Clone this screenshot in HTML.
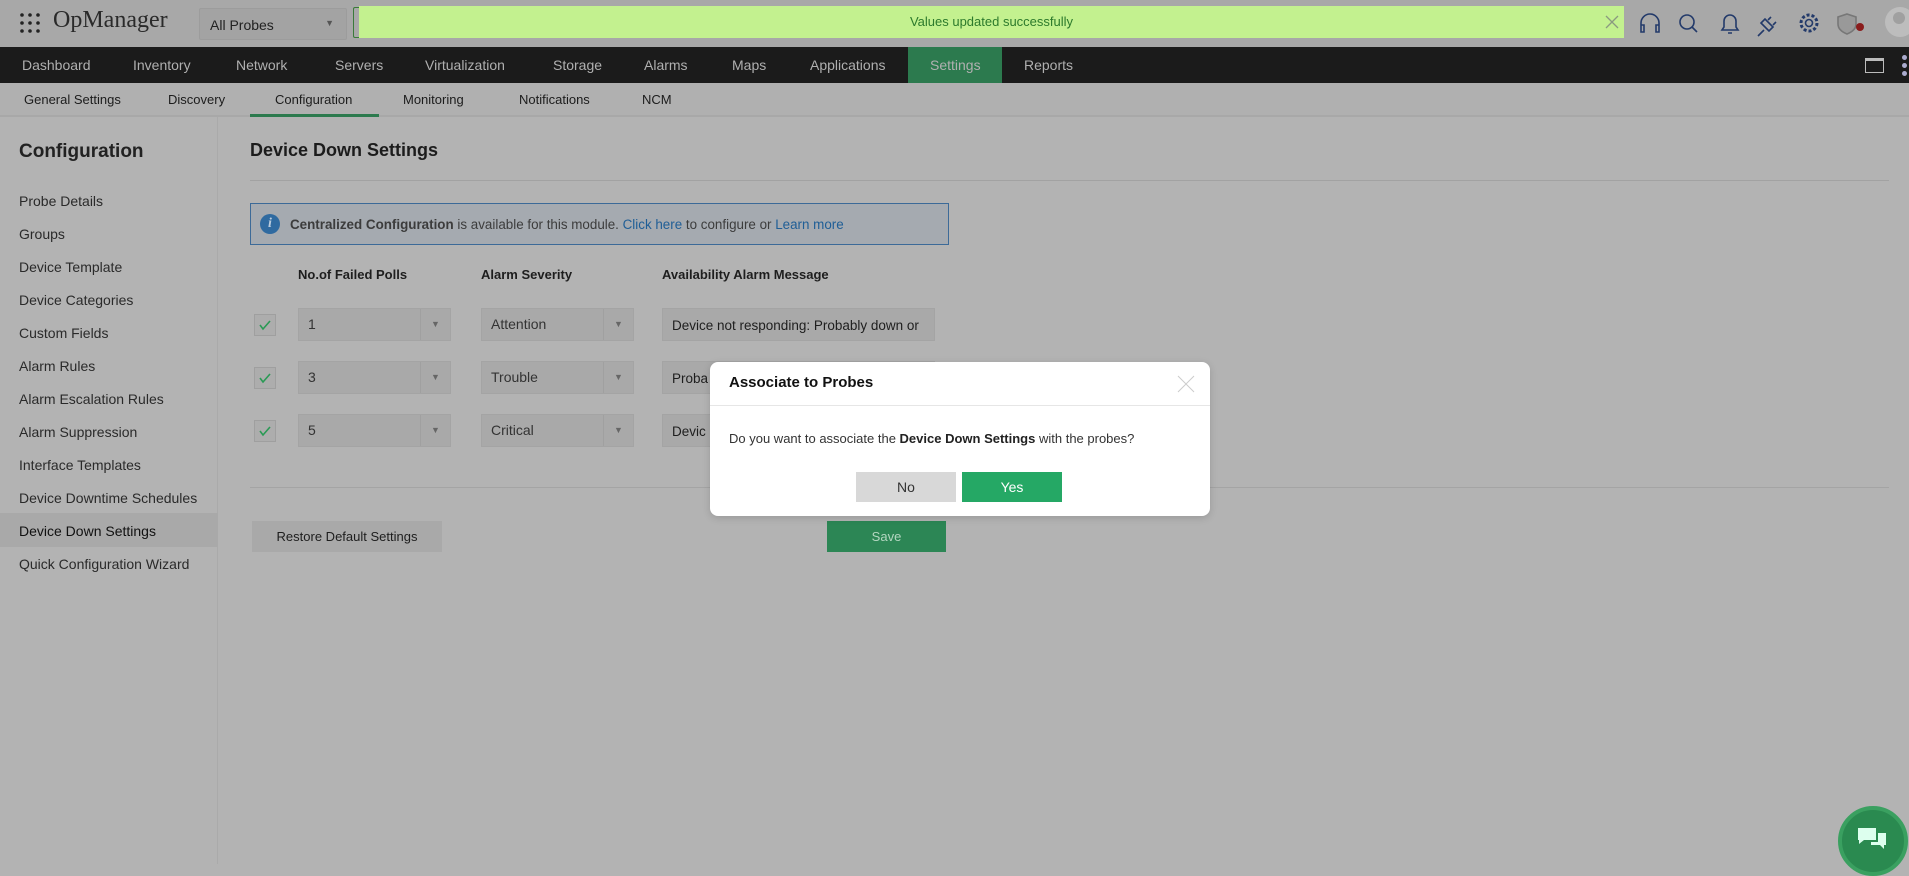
<!DOCTYPE html>
<html><head><meta charset="utf-8"><style>
*{margin:0;padding:0;box-sizing:border-box}
body{width:1909px;height:864px;overflow:hidden;background:#b3b3b3;font-family:"Liberation Sans",sans-serif;color:#222;position:relative}
.a{position:absolute}
#top{left:0;top:0;width:1909px;height:47px;background:#a8a8a8}
#nav{left:0;top:47px;width:1909px;height:36px;background:#1b1b1b}
#nav span{position:absolute;top:10px;font-size:14px;color:#b0b0b0}
#sub{left:0;top:83px;width:1909px;height:34px;background:#b0b0b0;border-bottom:2px solid #a8a8a8}
#sub span{position:absolute;top:9px;font-size:13px;color:#1c1c1c}
#side{left:0;top:117px;width:218px;height:747px;background:#b3b3b3;border-right:1px solid #aaa}
.si{position:absolute;left:19px;font-size:14px;color:#2a2a2a}
.sel{position:absolute;height:33px;border:1px solid #a4a4a4;background:#a9a9a9;font-size:14px;color:#333;padding:7px 0 0 9px}
.sel i{position:absolute;right:0;top:0;width:30px;height:31px;border-left:1px solid #a0a0a0;font-style:normal;font-size:9px;color:#666;text-align:center;line-height:31px}
.cb{position:absolute;left:254px;width:22px;height:22px;border:1px solid #9f9f9f;background:#adadad}
</style></head><body>
<div class="a" id="top"></div>
<div class="a" style="left:19px;top:12px;width:22px;height:22px">
<svg width="22" height="22"><g fill="#222"><circle cx="3" cy="3" r="1.8"/><circle cx="11" cy="3" r="1.8"/><circle cx="19" cy="3" r="1.8"/><circle cx="3" cy="11" r="1.8"/><circle cx="11" cy="11" r="1.8"/><circle cx="19" cy="11" r="1.8"/><circle cx="3" cy="19" r="1.8"/><circle cx="11" cy="19" r="1.8"/><circle cx="19" cy="19" r="1.8"/></g></svg></div>
<div class="a" style="left:53px;top:7px;font-family:'Liberation Serif',serif;font-size:24px;color:#2a2a2a">OpManager</div>
<div class="a" style="left:199px;top:8px;width:148px;height:32px;background:#a3a3a3;border:1px solid #9c9c9c;border-radius:2px;font-size:14px;padding:8px 0 0 10px;color:#222">All Probes<span style="position:absolute;right:12px;top:9px;font-size:9px;color:#555">▼</span></div>
<div class="a" style="left:353px;top:7px;width:8px;height:31px;border:1px solid #3a7a3a;border-right:none;border-radius:2px 0 0 2px"></div>
<div class="a" style="left:359px;top:6px;width:1265px;height:32px;background:#c3f18f;font-size:13px;color:#2c7a2c;text-align:center;line-height:32px">Values updated successfully</div>
<svg class="a" style="left:1605px;top:15px" width="14" height="14" stroke="#8a9a80" stroke-width="1.3"><path d="M1 1l12 12M13 1L1 13"/></svg>
<svg class="a" style="left:1637px;top:10px" width="270" height="28" fill="none" stroke="#233a6a" stroke-width="1.6">
<path d="M4 17v-4a9 9 0 0 1 18 0v4M4 15h3v7H4zM19 15h3v7h-3z"/>
<circle cx="50" cy="12" r="7"/><path d="M55 17l5 5"/>
<path d="M85 20h16l-2-3v-6a6 6 0 0 0-12 0v6zM91 23h4"/>
<path d="M127 20l-6 6M124 13l8 8 4-4-8-8zM131 10l3-3M136 15l3-3"/>
<circle cx="172" cy="13" r="3.5"/><circle cx="172" cy="13" r="8" stroke-dasharray="3 2" stroke-width="3"/>
<path d="M210 4l9 3v7c0 5-4 8-9 10-5-2-9-5-9-10V7z" fill="#999" stroke="#777"/>
</svg>
<div class="a" style="left:1856px;top:23px;width:8px;height:8px;border-radius:50%;background:#8a1c1c"></div>
<div class="a" style="left:1885px;top:7px;width:30px;height:30px;border-radius:50%;background:#bdbdbd"></div>
<div class="a" style="left:1893px;top:12px;width:12px;height:12px;border-radius:50%;background:#a0a0a0"></div>
<div class="a" id="nav">
<span style="left:22px">Dashboard</span><span style="left:133px">Inventory</span><span style="left:236px">Network</span><span style="left:335px">Servers</span><span style="left:425px">Virtualization</span><span style="left:553px">Storage</span><span style="left:644px">Alarms</span><span style="left:732px">Maps</span><span style="left:810px">Applications</span>
<div style="position:absolute;left:908px;top:0;width:94px;height:36px;background:#2c7a4e"></div>
<span style="left:930px">Settings</span><span style="left:1024px">Reports</span>
<div style="position:absolute;left:1865px;top:11px;width:19px;height:15px;border:1.5px solid #bbb;border-top-width:3px"></div>
<div style="position:absolute;left:1902px;top:8px;width:5px;height:5px;border-radius:50%;background:#aac"></div>
<div style="position:absolute;left:1902px;top:16px;width:5px;height:5px;border-radius:50%;background:#aac"></div>
<div style="position:absolute;left:1902px;top:24px;width:5px;height:5px;border-radius:50%;background:#aac"></div>
</div>
<div class="a" id="sub">
<span style="left:24px">General Settings</span><span style="left:168px">Discovery</span><span style="left:275px">Configuration</span><span style="left:403px">Monitoring</span><span style="left:519px">Notifications</span><span style="left:642px">NCM</span>
<div style="position:absolute;left:250px;top:31px;width:129px;height:3px;background:#2c7a4e"></div>
</div>
<div class="a" id="side">
<div style="position:absolute;left:19px;top:24px;font-size:19px;font-weight:bold;color:#222">Configuration</div>
<div style="position:absolute;left:0;top:396px;width:218px;height:34px;background:#a9a9a9"></div>
</div>
<div class="si" style="top:193px">Probe Details</div>
<div class="si" style="top:226px">Groups</div>
<div class="si" style="top:259px">Device Template</div>
<div class="si" style="top:292px">Device Categories</div>
<div class="si" style="top:325px">Custom Fields</div>
<div class="si" style="top:358px">Alarm Rules</div>
<div class="si" style="top:391px">Alarm Escalation Rules</div>
<div class="si" style="top:424px">Alarm Suppression</div>
<div class="si" style="top:457px">Interface Templates</div>
<div class="si" style="top:490px">Device Downtime Schedules</div>
<div class="si" style="top:523px;color:#111">Device Down Settings</div>
<div class="si" style="top:556px">Quick Configuration Wizard</div>

<div class="a" style="left:250px;top:140px;font-size:18px;font-weight:bold;color:#1c1c1c">Device Down Settings</div>
<div class="a" style="left:250px;top:180px;width:1639px;height:1px;background:#a2a2a2"></div>
<div class="a" style="left:250px;top:203px;width:699px;height:42px;border:1px solid #3c6a98;background:#a5aab0"></div>
<div class="a" style="left:260px;top:214px;width:20px;height:20px;border-radius:50%;background:#2f6aa0;color:#bcd;font:bold italic 14px 'Liberation Serif',serif;text-align:center;line-height:20px">i</div>
<div class="a" style="left:290px;top:217px;font-size:13.4px;color:#3c3c3c"><b>Centralized Configuration</b> is available for this module. <span style="color:#1f5e96">Click here</span> to configure or <span style="color:#1f5e96">Learn more</span></div>
<div class="a" style="left:298px;top:267px;font-size:13px;font-weight:bold;color:#1e1e1e">No.of Failed Polls</div>
<div class="a" style="left:481px;top:267px;font-size:13px;font-weight:bold;color:#1e1e1e">Alarm Severity</div>
<div class="a" style="left:662px;top:267px;font-size:13px;font-weight:bold;color:#1e1e1e">Availability Alarm Message</div>

<div class="cb" style="top:314px"></div><div class="cb" style="top:367px"></div><div class="cb" style="top:420px"></div>
<svg class="a" style="left:254px;top:314px" width="22" height="140" fill="none" stroke="#2a9a55" stroke-width="1.6"><path d="M6 11l3 4 7-8M6 64l3 4 7-8M6 117l3 4 7-8"/></svg>
<div class="sel" style="left:298px;top:308px;width:153px">1<i>▼</i></div>
<div class="sel" style="left:298px;top:361px;width:153px">3<i>▼</i></div>
<div class="sel" style="left:298px;top:414px;width:153px">5<i>▼</i></div>
<div class="sel" style="left:481px;top:308px;width:153px">Attention<i>▼</i></div>
<div class="sel" style="left:481px;top:361px;width:153px">Trouble<i>▼</i></div>
<div class="sel" style="left:481px;top:414px;width:153px">Critical<i>▼</i></div>
<div class="sel" style="left:662px;top:308px;width:273px;padding-top:9px;font-size:13.5px;color:#1e1e1e">Device not responding: Probably down or</div>
<div class="sel" style="left:662px;top:361px;width:273px;padding-top:9px;font-size:13.5px;color:#1e1e1e">Proba</div>
<div class="sel" style="left:662px;top:414px;width:273px;padding-top:9px;font-size:13.5px;color:#1e1e1e">Devic</div>

<div class="a" style="left:250px;top:487px;width:1639px;height:1px;background:#a4a4a4"></div>
<div class="a" style="left:252px;top:521px;width:190px;height:31px;background:#a9a9a9;font-size:13px;color:#1e1e1e;text-align:center;line-height:31px">Restore Default Settings</div>
<div class="a" style="left:827px;top:521px;width:119px;height:31px;background:#2c8655;font-size:13px;color:#b3d6c0;text-align:center;line-height:31px">Save</div>

<div class="a" style="left:710px;top:362px;width:500px;height:154px;background:#fff;border-radius:8px;box-shadow:0 2px 8px rgba(0,0,0,.15)"></div>
<div class="a" style="left:729px;top:374px;font-size:15px;font-weight:bold;color:#111">Associate to Probes</div>
<svg class="a" style="left:1177px;top:375px" width="18" height="18" stroke="#ccc" stroke-width="1"><path d="M1 1l16 16M17 1L1 17"/></svg>
<div class="a" style="left:710px;top:405px;width:500px;height:1px;background:#e6e6e6"></div>
<div class="a" style="left:729px;top:431px;font-size:13px;color:#333">Do you want to associate the <b style="color:#222">Device Down Settings</b> with the probes?</div>
<div class="a" style="left:856px;top:472px;width:100px;height:30px;background:#d8d8d8;font-size:14px;color:#333;text-align:center;line-height:30px">No</div>
<div class="a" style="left:962px;top:472px;width:100px;height:30px;background:#25a865;font-size:14px;color:#fff;text-align:center;line-height:30px">Yes</div>

<div class="a" style="left:1838px;top:806px;width:70px;height:70px;border-radius:50%;background:#2a8a50;border:4px solid #3aa060"></div>
<svg class="a" style="left:1856px;top:826px" width="32" height="26"><path d="M2 2h18v12H8l-5 4V14H2z" fill="#dfe" /><path d="M22 7h8v12h-2v4l-4-4h-9v-3h7z" fill="#dfe"/></svg>
</body></html>
